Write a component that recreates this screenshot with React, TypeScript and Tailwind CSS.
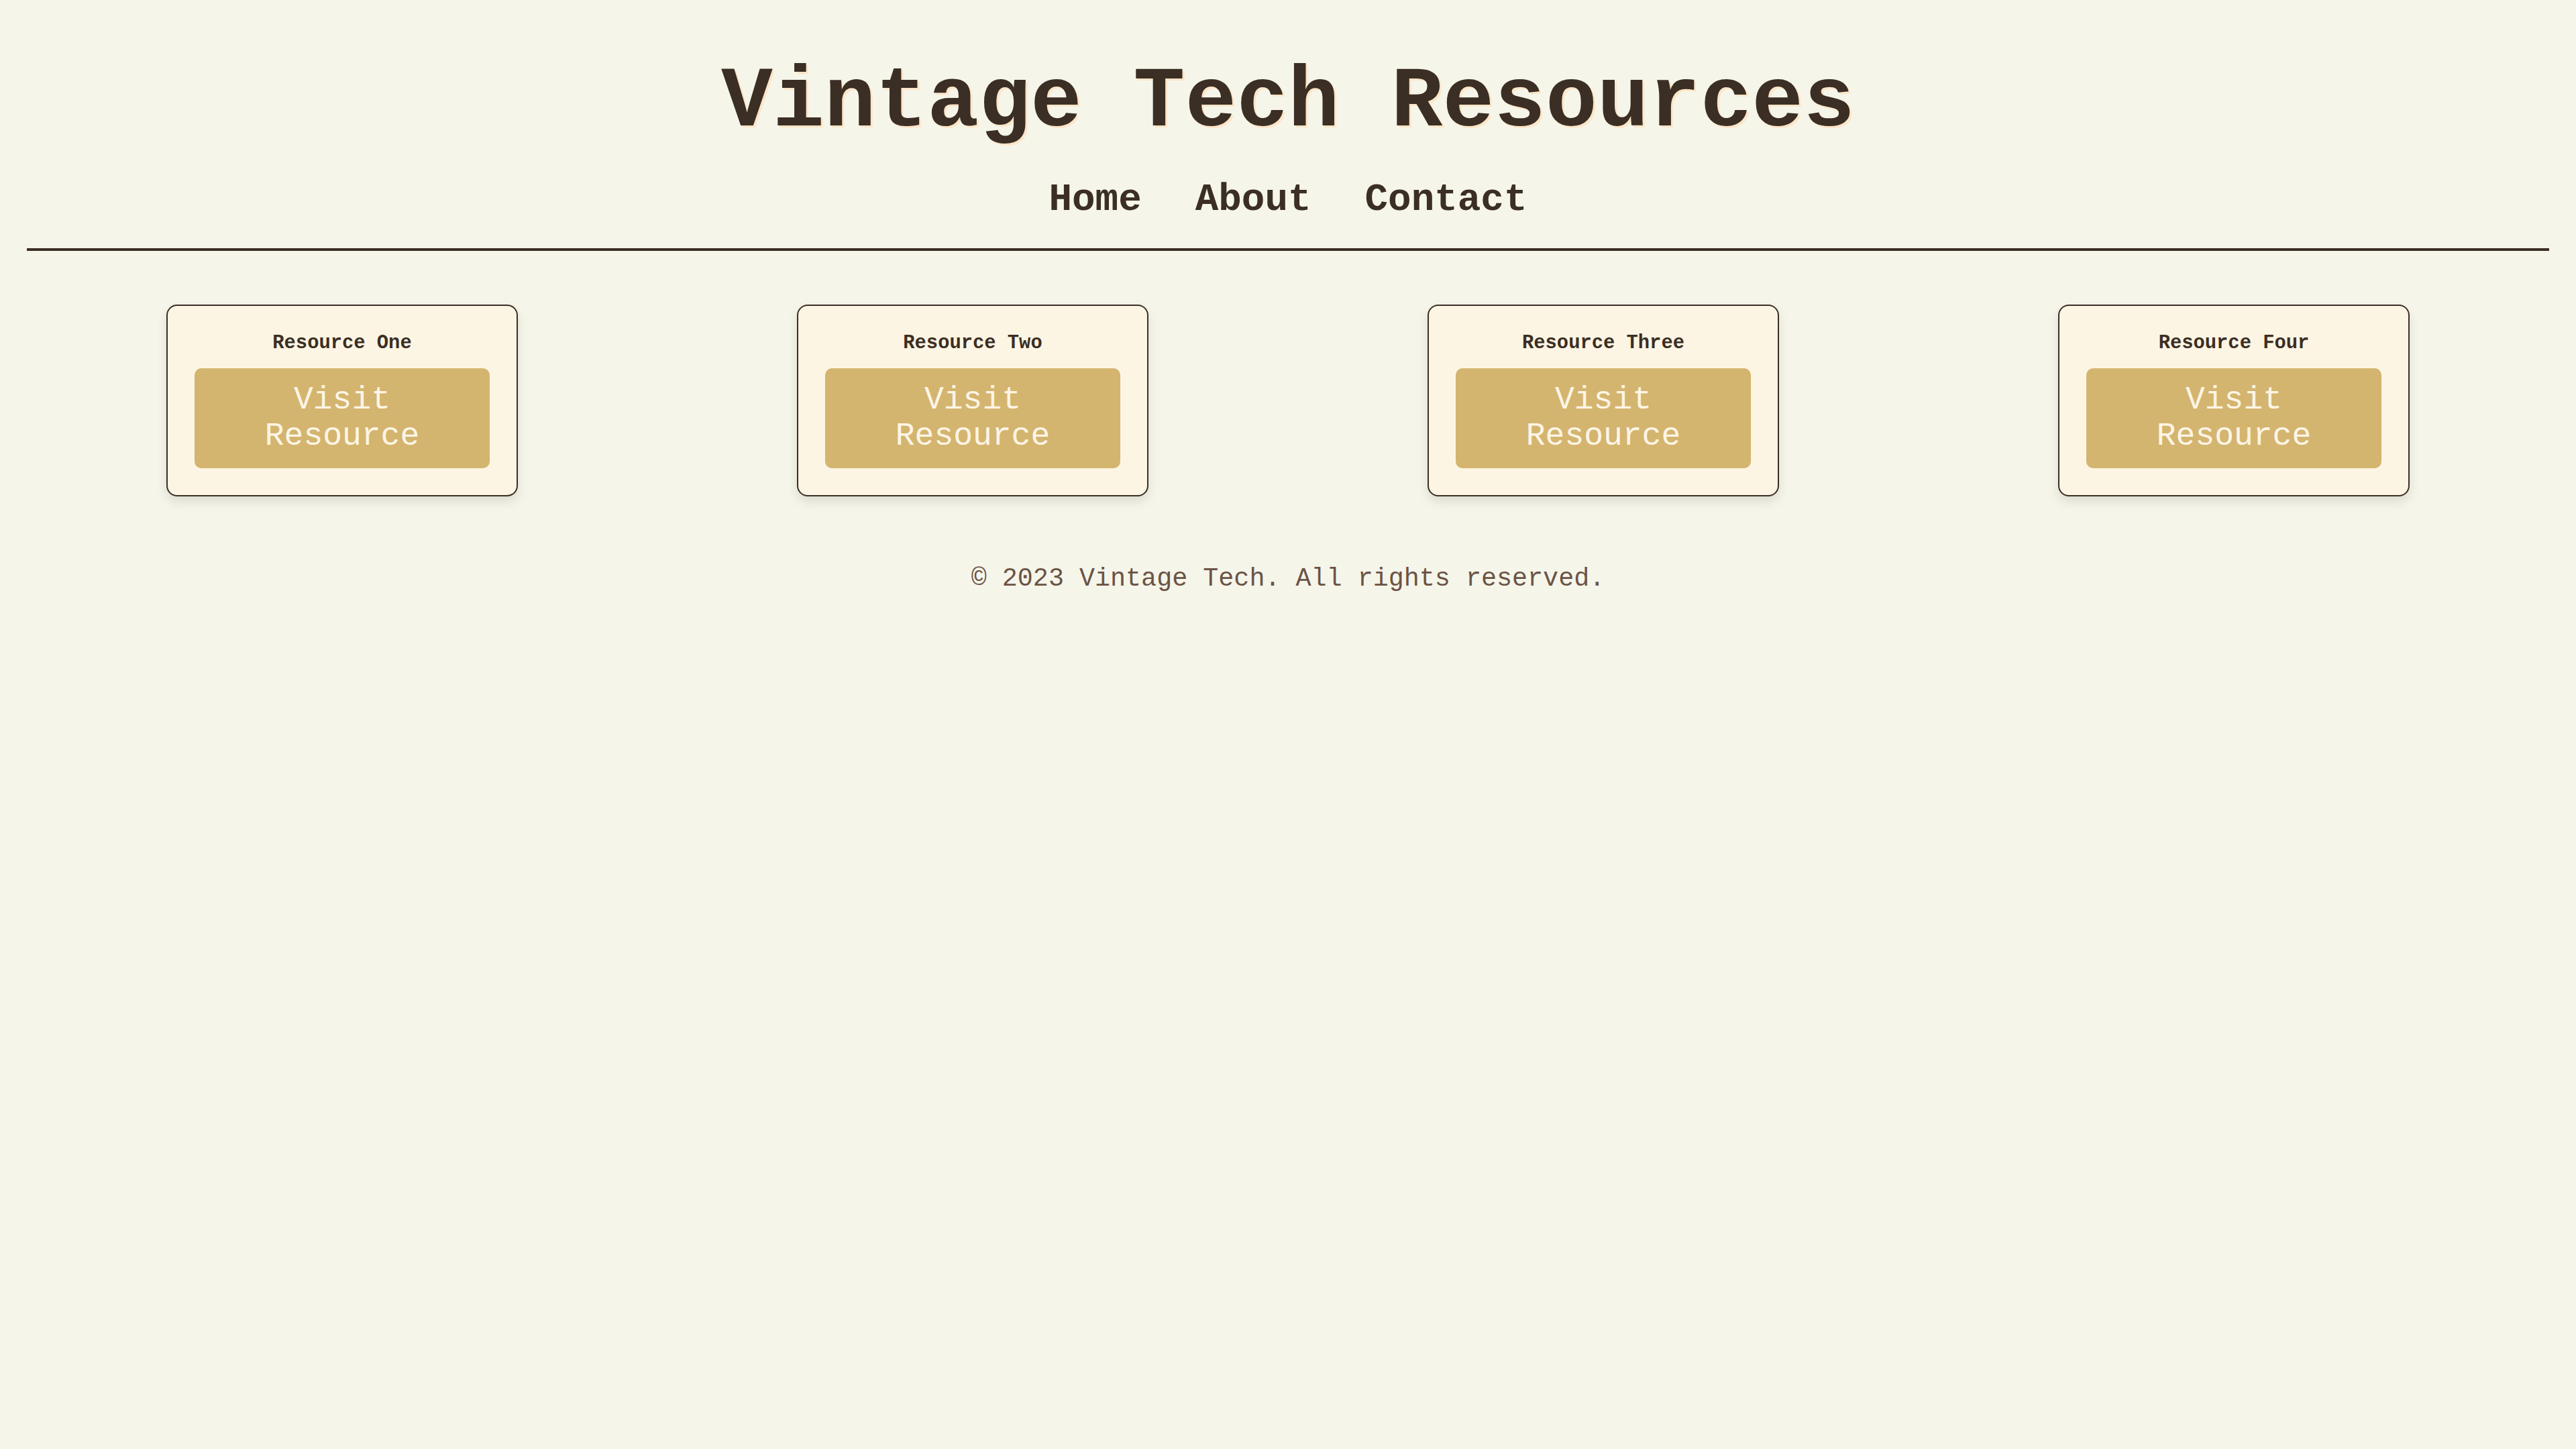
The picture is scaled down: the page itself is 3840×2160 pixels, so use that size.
const resources = [
  { name: "Resource One", href: "#" },
  { name: "Resource Two", href: "#" },
  { name: "Resource Three", href: "#" },
  { name: "Resource Four", href: "#" },
];

const navLinks = ["Home", "About", "Contact"];

function ResourceCard({ name, href }: { name: string; href: string }) {
  return (
    <div className="w-[524px] rounded-2xl border-2 border-[#3b2e24] bg-[#fdf5e3] p-10 text-center shadow-[0_8px_16px_rgba(0,0,0,0.1)]">
      <h2 className="mb-5 text-[28.8px] font-bold leading-[1.133] text-[#3b2e24]">{name}</h2>
      <a
        href={href}
        className="block rounded-[10px] bg-[#d4b56f] px-10 py-5 text-[48px] leading-[1.133] text-[#fdf5e6] hover:bg-[#c9a75d]"
      >
        Visit Resource
      </a>
    </div>
  );
}

export default function App() {
  return (
    <div className="min-h-screen bg-[#f5f5ea] p-10 font-['Courier_New','Liberation_Mono',monospace] text-[#3b2e24]">
      <header className="border-b-4 border-[#3b2e24] pb-10 pt-10 text-center">
        <h1 className="mb-10 text-[128px] font-bold leading-[1.133] [text-shadow:3px_3px_0_#fde6c8]">
          Vintage Tech Resources
        </h1>
        <nav className="flex justify-center gap-20 text-[57.6px] font-bold leading-[1.133]">
          {navLinks.map((link) => (
            <a key={link} href="#" className="hover:underline">
              {link}
            </a>
          ))}
        </nav>
      </header>

      <main className="mt-20 grid grid-cols-4 justify-items-center">
        {resources.map((resource) => (
          <ResourceCard key={resource.name} {...resource} />
        ))}
      </main>

      <footer className="mt-[102px] text-center text-[38.4px] leading-[1.133] text-[#6b5344]">
        © 2023 Vintage Tech. All rights reserved.
      </footer>
    </div>
  );
}
